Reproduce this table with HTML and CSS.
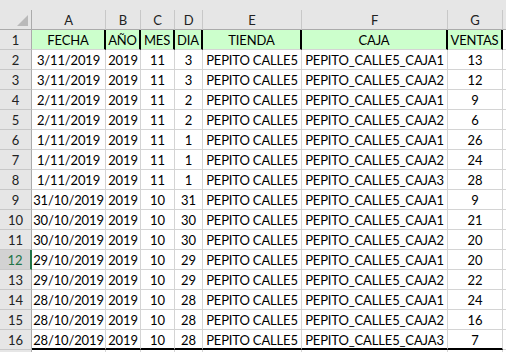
FILE: index.html
```html
<!DOCTYPE html>
<html>
<head>
<meta charset="utf-8">
<link rel="stylesheet" href="styles.css">
</head>
<body>
<div class="sheet">
  <div class="strip"></div>

  <div class="corner"><div class="tri"></div></div>
  <div class="ch">A</div><div class="ch">B</div><div class="ch">C</div><div class="ch">D</div><div class="ch">E</div><div class="ch">F</div><div class="ch">G</div><div class="ch end"></div>

  <div class="rh">1</div>
  <div class="c hd">FECHA</div><div class="c hd">AÑO</div><div class="c hd">MES</div><div class="c hd">DIA</div><div class="c hd">TIENDA</div><div class="c hd">CAJA</div><div class="c hd">VENTAS</div><div class="c end"></div>

  <div class="rh">2</div>
  <div class="c">3/11/2019</div><div class="c">2019</div><div class="c">11</div><div class="c">3</div><div class="c">PEPITO CALLE5</div><div class="c">PEPITO_CALLE5_CAJA1</div><div class="c">13</div><div class="c end"></div>

  <div class="rh">3</div>
  <div class="c">3/11/2019</div><div class="c">2019</div><div class="c">11</div><div class="c">3</div><div class="c">PEPITO CALLE5</div><div class="c">PEPITO_CALLE5_CAJA2</div><div class="c">12</div><div class="c end"></div>

  <div class="rh">4</div>
  <div class="c">2/11/2019</div><div class="c">2019</div><div class="c">11</div><div class="c">2</div><div class="c">PEPITO CALLE5</div><div class="c">PEPITO_CALLE5_CAJA1</div><div class="c">9</div><div class="c end"></div>

  <div class="rh">5</div>
  <div class="c">2/11/2019</div><div class="c">2019</div><div class="c">11</div><div class="c">2</div><div class="c">PEPITO CALLE5</div><div class="c">PEPITO_CALLE5_CAJA2</div><div class="c">6</div><div class="c end"></div>

  <div class="rh">6</div>
  <div class="c">1/11/2019</div><div class="c">2019</div><div class="c">11</div><div class="c">1</div><div class="c">PEPITO CALLE5</div><div class="c">PEPITO_CALLE5_CAJA1</div><div class="c">26</div><div class="c end"></div>

  <div class="rh">7</div>
  <div class="c">1/11/2019</div><div class="c">2019</div><div class="c">11</div><div class="c">1</div><div class="c">PEPITO CALLE5</div><div class="c">PEPITO_CALLE5_CAJA2</div><div class="c">24</div><div class="c end"></div>

  <div class="rh">8</div>
  <div class="c">1/11/2019</div><div class="c">2019</div><div class="c">11</div><div class="c">1</div><div class="c">PEPITO CALLE5</div><div class="c">PEPITO_CALLE5_CAJA3</div><div class="c">28</div><div class="c end"></div>

  <div class="rh">9</div>
  <div class="c">31/10/2019</div><div class="c">2019</div><div class="c">10</div><div class="c">31</div><div class="c">PEPITO CALLE5</div><div class="c">PEPITO_CALLE5_CAJA1</div><div class="c">9</div><div class="c end"></div>

  <div class="rh">10</div>
  <div class="c">30/10/2019</div><div class="c">2019</div><div class="c">10</div><div class="c">30</div><div class="c">PEPITO CALLE5</div><div class="c">PEPITO_CALLE5_CAJA1</div><div class="c">21</div><div class="c end"></div>

  <div class="rh">11</div>
  <div class="c">30/10/2019</div><div class="c">2019</div><div class="c">10</div><div class="c">30</div><div class="c">PEPITO CALLE5</div><div class="c">PEPITO_CALLE5_CAJA2</div><div class="c">20</div><div class="c end"></div>

  <div class="rh sel">12</div>
  <div class="c">29/10/2019</div><div class="c">2019</div><div class="c">10</div><div class="c">29</div><div class="c">PEPITO CALLE5</div><div class="c">PEPITO_CALLE5_CAJA1</div><div class="c">20</div><div class="c end"></div>

  <div class="rh">13</div>
  <div class="c">29/10/2019</div><div class="c">2019</div><div class="c">10</div><div class="c">29</div><div class="c">PEPITO CALLE5</div><div class="c">PEPITO_CALLE5_CAJA2</div><div class="c">22</div><div class="c end"></div>

  <div class="rh">14</div>
  <div class="c">28/10/2019</div><div class="c">2019</div><div class="c">10</div><div class="c">28</div><div class="c">PEPITO CALLE5</div><div class="c">PEPITO_CALLE5_CAJA1</div><div class="c">24</div><div class="c end"></div>

  <div class="rh">15</div>
  <div class="c">28/10/2019</div><div class="c">2019</div><div class="c">10</div><div class="c">28</div><div class="c">PEPITO CALLE5</div><div class="c">PEPITO_CALLE5_CAJA2</div><div class="c">16</div><div class="c end"></div>

  <div class="rh">16</div>
  <div class="c last">28/10/2019</div><div class="c last">2019</div><div class="c last">10</div><div class="c last">28</div><div class="c last">PEPITO CALLE5</div><div class="c last">PEPITO_CALLE5_CAJA3</div><div class="c last">7</div><div class="c end"></div>

  <div class="rh tail"></div>
  <div class="c tail"></div><div class="c tail"></div><div class="c tail"></div><div class="c tail"></div><div class="c tail"></div><div class="c tail"></div><div class="c tail"></div><div class="c tail end"></div>
</div>
</body>
</html>
```

FILE: styles.css
```css
html, body {
  margin: 0;
  padding: 0;
  background: #ffffff;
  overflow: hidden;
}

.sheet {
  display: grid;
  grid-template-columns: 32px 74px 35px 34px 28px 99px 146px 55px 3px;
  grid-template-rows: 10px 20px repeat(16, 20px) 2px;
  width: 506px;
  height: 352px;
  font-family: Lato, "Liberation Sans", Arial, sans-serif;
  font-size: 13px;
  letter-spacing: -0.15px;
  color: #000000;
}

.sheet > div {
  box-sizing: border-box;
  white-space: nowrap;
}

.strip {
  grid-column: 1 / -1;
  background: #e6e6e6;
}

.corner {
  background: #e6e6e6;
  border-right: 1px solid #ababab;
  border-bottom: 1px solid #ababab;
  display: flex;
  justify-content: flex-end;
  align-items: flex-end;
  padding: 0 3px 3px 0;
}

.tri {
  width: 11px;
  height: 11px;
  background: #b9b9b9;
  clip-path: polygon(100% 0, 100% 100%, 0 100%);
}

.ch {
  background: #e6e6e6;
  border-right: 1px solid #c8c8c8;
  border-bottom: 1px solid #ababab;
  text-align: center;
  line-height: 20px;
  color: #222222;
}

.rh {
  background: #e6e6e6;
  border-right: 1px solid #ababab;
  border-bottom: 1px solid #c8c8c8;
  text-align: center;
  line-height: 20px;
  color: #222222;
}

.rh.sel {
  background: #d2d2d2;
  color: #217346;
  border-right: 2px solid #217346;
}

.c {
  border-right: 1px solid #d4d4d4;
  border-bottom: 1px solid #d4d4d4;
  text-align: center;
  line-height: 20px;
}

.c.hd {
  background: #ccffcc;
  border-right: 2px solid #000000;
}

.c.last {
  border-bottom: 2px solid #000000;
}

.c.end, .ch.end {
  border-right: none;
}

.tail {
  border-bottom: none;
}
```
